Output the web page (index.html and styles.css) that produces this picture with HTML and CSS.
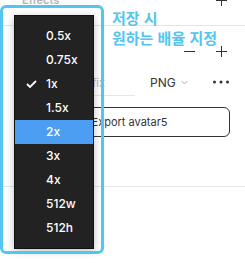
FILE: index.html
```html
<!DOCTYPE html>
<html lang="ko">
<head>
  <meta charset="UTF-8" />
  <meta name="viewport" content="width=device-width, initial-scale=1.0"/>
  <title>Export scale</title>
  <link rel="stylesheet" href="styles.css">
</head>
<body>
  <div class="panel">
    <section class="sec sec-effects">
      <div class="sec-head">
        <span class="sec-title">Effects</span>
        <svg class="icon" width="11" height="11" viewBox="0 0 11 11"><path d="M5.5 0v11M0 5.5h11" stroke="#333" stroke-width="1"/></svg>
      </div>
    </section>

    <section class="sec sec-export">
      <div class="sec-head">
        <span class="sec-title"></span>
        <div class="head-icons">
          <svg class="icon" width="11" height="11" viewBox="0 0 11 11"><path d="M0 5.5h11" stroke="#333" stroke-width="1"/></svg>
          <svg class="icon" width="11" height="11" viewBox="0 0 11 11"><path d="M5.5 0v11M0 5.5h11" stroke="#333" stroke-width="1"/></svg>
        </div>
      </div>

      <div class="export-row">
        <span class="scale"></span>
        <span class="suffix">Suffix</span>
        <span class="format">PNG
          <svg width="7" height="5" viewBox="0 0 7 5"><path d="M0.5 1l3 3 3-3" fill="none" stroke="#b3b3b3" stroke-width="1"/></svg>
        </span>
        <svg class="more" width="16" height="4" viewBox="0 0 16 4"><circle cx="1.5" cy="2" r="1.5" fill="#333"/><circle cx="8" cy="2" r="1.5" fill="#333"/><circle cx="14.5" cy="2" r="1.5" fill="#333"/></svg>
      </div>

      <button class="export-btn">Export avatar5</button>
    </section>

    <section class="sec sec-empty"></section>
  </div>

  <!-- scale menu, open -->
  <ul class="scale-menu">
    <li>0.5x</li>
    <li>0.75x</li>
    <li class="checked">
      <svg class="check" width="11" height="8" viewBox="0 0 11 8"><path d="M1 4l3 3 6-6" fill="none" stroke="#fff" stroke-width="1.8"/></svg>
      1x
    </li>
    <li>1.5x</li>
    <li class="active">2x</li>
    <li>3x</li>
    <li>4x</li>
    <li>512w</li>
    <li>512h</li>
  </ul>

  <!-- annotation -->
  <div class="note-box"></div>
  <div class="note-text">저장 시<br>원하는 배율 지정</div>
</body>
</html>
```

FILE: styles.css
```css
body {
  margin: 0;
  background: #fff;
  font-family: 'Inter', 'Roboto', sans-serif;
  font-size: 11px;
  color: #333;
  overflow: hidden;
}

.panel {
  margin-top: -16px;
}

.sec {
  border-bottom: 1px solid #e5e5e5;
}

.sec-head {
  height: 32px;
  display: flex;
  align-items: center;
  justify-content: space-between;
  padding: 0 18px 0 22px;
}

.sec-title {
  font-weight: 600;
  color: #b3b3b3;
}

.icon {
  display: block;
}

.sec-effects {
  padding-bottom: 9px;
}

.sec-export {
  padding-top: 9px;
  padding-bottom: 49px;
}

.head-icons {
  display: flex;
  gap: 21px;
}

.export-row {
  height: 30px;
  display: flex;
  align-items: center;
  padding: 0 16px;
}

.scale {
  width: 48px;
}

.suffix {
  width: 60px;
  margin-left: 8px;
  padding-left: 3px;
  color: #b3b3b3;
  line-height: 24px;
  border-bottom: 1px solid #e5e5e5;
  margin-top: 3px;
}

.format {
  margin-left: 15px;
  display: flex;
  align-items: center;
  gap: 5px;
  font-size: 12px;
}

.more {
  margin-left: auto;
}

.export-btn {
  display: block;
  box-sizing: border-box;
  width: 214px;
  height: 30px;
  margin: 10px 0 0 16px;
  padding: 0 0 0 13px;
  background: #fff;
  border: 1px solid #333;
  border-radius: 6px;
  font-family: 'Inter', 'Roboto', sans-serif;
  font-size: 11px;
  color: #333;
}

.sec-empty {
  border: none;
}

.scale-menu {
  position: absolute;
  left: 14px;
  top: 15px;
  width: 80px;
  margin: 0;
  padding: 8px 0;
  list-style: none;
  background: #222;
  box-sizing: border-box;
  border: 1px solid #111;
  box-shadow: 0 2px 8px rgba(0, 0, 0, 0.25);
}

.scale-menu li {
  position: relative;
  height: 24px;
  line-height: 24px;
  padding-left: 31px;
  color: #fff;
  font-size: 12px;
  font-weight: 500;
}

.scale-menu li.active {
  background: #4b9ef2;
}

.check {
  position: absolute;
  left: 11px;
  top: 8px;
}

.note-box {
  position: absolute;
  left: 0;
  top: 5px;
  width: 104px;
  height: 249px;
  box-sizing: border-box;
  border: 3px solid #52c5f0;
  border-radius: 6px;
}

.note-text {
  position: absolute;
  left: 112px;
  top: 8px;
  font-family: 'Noto Sans CJK KR', sans-serif;
  font-size: 15px;
  font-weight: 700;
  line-height: 20px;
  color: #52c5f0;
}
```
